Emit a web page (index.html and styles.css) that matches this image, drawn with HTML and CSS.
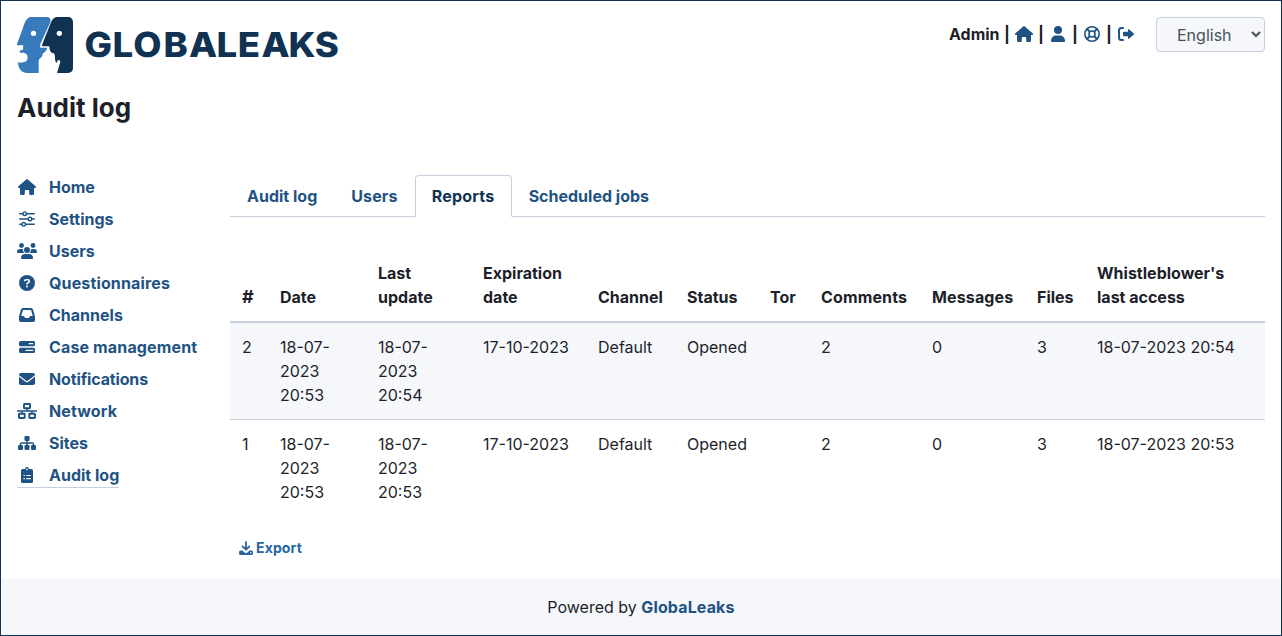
FILE: index.html
```html
<!DOCTYPE html>
<html lang="en">
<head>
<meta charset="utf-8">
<title>Audit log</title>
<link rel="stylesheet" href="styles.css">
</head>
<body>
<svg class="sprite" aria-hidden="true">
  <symbol id="home" viewBox="0 0 20 16"><path d="M9.200 .4Q10 -.3 10.800 .4L18.600 7.200Q19.200 7.900 18.900 8.500Q18.700 9 18 9H17V14.500Q17 16 15.500 16H13.500Q12.200 16 12.200 14.700V12Q12.200 11 11.200 11H8.800Q7.800 11 7.800 12V14.700Q7.800 16 6.500 16H4.500Q3 16 3 14.500V9H2Q1.300 9 1.100 8.500Q.8 7.900 1.400 7.200Z"/></symbol>
</svg>
<header class="header">
  <svg class="logo" viewBox="0 0 322 56" role="img" aria-label="GlobaLeaks">
    <g transform="scale(.33333) translate(-51 -51)">
      <path fill="#377bbc" d="M91 51H143Q154 54 151 67L122 130Q119 139 121 143H141Q142 152 134 156Q132 161 128 158Q129 171 121 174Q116 177 116 184V219H80Q59 217 55 196L54 186Q60 190 70 187Q83 185 83 172Q83 161 71 158H60Q57 154 62 151L69 149L70 136H52Q50 133 53 127L74 69Q79 55 91 51Z"/>
      <path fill="#103253" d="M168 51H206Q219 53 219 67V203Q219 218 204 219H171L181 186Q181 180 176 180Q172 180 169 190Q166 185 165 178Q166 162 160 159Q155 161 151 154Q148 150 148 139H127Q125 137 128 130L151 72Q156 56 168 51Z"/>
      <circle cx="100.500" cy="100" r="8" fill="#fff"/><circle cx="178" cy="100" r="8" fill="#fff"/>
    </g>
    <text class="wordmark" transform="scale(1.06 1)" y="40" x="63.800 90.100 109.700 138.200 162.300 188.200 208.300 230.700 256.100 281">GLOBALEAKS</text>
  </svg>
  <div class="tools">
    <span class="name">Admin</span>
    <span class="bar">|</span><svg class="icon"><use href="#home" width="20" height="16"/></svg>
    <span class="bar">|</span><svg class="icon" viewBox="0 0 20 16"><circle cx="10" cy="4" r="4"/><path d="M3 15C3 11.500 5.500 9.500 8.500 9.500H11.500C14.500 9.500 17 11.500 17 15Q17 16 16 16H4Q3 16 3 15Z"/></svg>
    <span class="bar">|</span><svg class="icon line" viewBox="0 0 20 16"><circle cx="10" cy="8" r="7.200"/><circle cx="10" cy="8" r="3"/><path d="M5 3L8 6M15 3L12 6M5 13L8 10M15 13L12 10" stroke-width="1.800"/></svg>
    <span class="bar">|</span><svg class="icon" viewBox="0 0 20 16"><path class="stroke" stroke-width="2" stroke-linecap="round" d="M7 2H5.500Q3 2 3 4.500V11.500Q3 14 5.500 14H7"/><path d="M8 5.800Q7 5.800 7 6.800V9.200Q7 10.200 8 10.200H12V12Q12 13.500 13.200 12.600L17.600 8.700Q18.200 8 17.600 7.300L13.200 3.400Q12 2.500 12 4V5.800Z"/></svg>
  </div>
  <select class="language" aria-label="Language"><option>English</option></select>
</header>
<h1 class="title">Audit log</h1>
<div class="layout">
  <nav class="sidebar">
    <a><svg class="icon"><use href="#home" width="20" height="16"/></svg>Home</a>
    <a><svg class="icon" viewBox="0 0 20 16"><path class="stroke" stroke-width="1.600" stroke-linecap="round" d="M2.800 2.700H5.500M10 2.700H17.200M2.800 8H11M15 8H17.200M2.800 13.300H4.500M9 13.300H17.200"/><g class="stroke" stroke-width="1.400"><circle cx="7.700" cy="2.700" r="1.800"/><circle cx="13" cy="8" r="1.800"/><circle cx="6.700" cy="13.300" r="1.800"/></g></svg>Settings</a>
    <a><svg class="icon" viewBox="0 0 20 16"><circle cx="4.500" cy="2.500" r="2.400"/><circle cx="16" cy="2.500" r="2.400"/><circle cx="10" cy="7" r="3"/><path d="M0 9.300Q0 6 3.300 6H4.700Q5.600 6 6.200 6.400Q5.800 8.500 7.300 10H.7Q0 10 0 9.300ZM20 9.300Q20 6 16.700 6H15.300Q14.400 6 13.800 6.400Q14.200 8.500 12.700 10H19.300Q20 10 20 9.300ZM4 15.200Q4 11 8.200 11H11.800Q16 11 16 15.200Q16 16 15.200 16H4.800Q4 16 4 15.200Z"/></svg>Users</a>
    <a class="wide"><svg class="icon" viewBox="0 0 20 16"><circle cx="10" cy="8" r="8"/><path class="cut" stroke-width="1.500" stroke-linecap="round" stroke-linejoin="round" d="M7.700 5.800Q7.700 4.700 9 4.700H10.800Q12.400 4.700 12.400 6.200Q12.400 7.200 11.400 7.700L10 8.500V9"/><circle cx="10" cy="11.500" r="1" fill="#fff"/></svg>Questionnaires</a>
    <a><svg class="icon" viewBox="0 0 20 16"><path fill-rule="evenodd" d="M6 1H14Q15.600 1 16 2.600L18 9.500V13Q18 15 16 15H4Q2 15 2 13V9.500L4 2.600Q4.400 1 6 1ZM6 3L4.200 9H6.500Q7 9 7.300 9.600L8 11H12L12.700 9.600Q13 9 13.500 9H15.800L14 3Z"/></svg>Channels</a>
    <a class="wide"><svg class="icon" viewBox="0 0 20 16"><rect x="2" y="2" width="16" height="5.300" rx="1.500"/><rect x="2" y="8.700" width="16" height="5.300" rx="1.500"/><path class="cut" stroke-width="1.300" stroke-linecap="round" d="M12.200 4.650H15.800M9 11.350H15.800"/></svg>Case management</a>
    <a class="narrow"><svg class="icon" viewBox="0 0 20 16"><rect x="2" y="2" width="16" height="12" rx="1.800"/><path class="cut" stroke-width="1.100" d="M1.500 4.500L8.800 10.200Q10 11.100 11.200 10.200L18.500 4.500"/></svg>Notifications</a>
    <a class="wide"><svg class="icon" viewBox="0 0 20 16"><path class="stroke" stroke-width="1.500" d="M0 8H20M10 6V8M5 8V10.500M15 8V10.500"/><g class="stroke" stroke-width="1.900"><rect x="7" y="1" width="6" height="4.200" rx=".5"/><rect x="2" y="10.800" width="5.700" height="4.200" rx=".5"/><rect x="12.300" y="10.800" width="5.700" height="4.200" rx=".5"/></g></svg>Network</a>
    <a><svg class="icon" viewBox="0 0 20 16"><rect x="7.500" y="1" width="5" height="5" rx="1.200"/><rect x="1" y="10" width="5" height="5" rx="1.200"/><rect x="7.500" y="10" width="5" height="5" rx="1.200"/><rect x="14" y="10" width="5" height="5" rx="1.200"/><path class="stroke" stroke-width="1.400" d="M10 5V11M3.500 11V9Q3.500 8 4.500 8H15.500Q16.500 8 16.500 9V11"/></svg>Sites</a>
    <a class="current"><svg class="icon" viewBox="0 0 20 16"><rect x="4" y="2" width="12" height="14" rx="1.600"/><path d="M7 4V2H8Q8.300 0 10 0T12 2H13V4Z"/><circle cx="10" cy="2.400" r=".8" fill="#fff"/><path class="cut" stroke-width="1.200" d="M6.500 8.500H7.900M9.200 8.500H13.800M6.500 11.700H7.900M9.200 11.700H13.800"/></svg>Audit log</a>
  </nav>
  <main class="content">
    <div class="tabs"><a>Audit log</a><a class="wide">Users</a><a class="active">Reports</a><a>Scheduled jobs</a></div>
    <table class="reports">
      <colgroup><col class="c-id"><col class="c-date"><col class="c-update"><col class="c-expiry"><col class="c-channel"><col class="c-status"><col class="c-tor"><col class="c-comments"><col class="c-messages"><col class="c-files"><col></colgroup>
      <thead><tr><th class="hash">#</th><th>Date</th><th>Last<br>update</th><th>Expiration<br>date</th><th>Channel</th><th>Status</th><th>Tor</th><th class="wide">Comments</th><th class="wide">Messages</th><th>Files</th><th>Whistleblower's<br>last access</th></tr></thead>
      <tbody>
        <tr><td>2</td><td>18-07-<br>2023<br>20:53</td><td>18-07-<br>2023<br>20:54</td><td>17-10-2023</td><td>Default</td><td>Opened</td><td></td><td>2</td><td>0</td><td>3</td><td>18-07-2023 20:54</td></tr>
        <tr><td>1</td><td>18-07-<br>2023<br>20:53</td><td>18-07-<br>2023<br>20:53</td><td>17-10-2023</td><td>Default</td><td>Opened</td><td></td><td>2</td><td>0</td><td>3</td><td>18-07-2023 20:53</td></tr>
      </tbody>
    </table>
    <a class="export"><svg viewBox="0 0 14 14"><path class="stroke" stroke-width="1.800" stroke-linecap="round" stroke-linejoin="round" d="M7 1V8.500M3.700 5.500L7 8.700L10.300 5.500"/><path d="M1.500 9.500H3.500L5.500 11.400Q7 12.400 8.500 11.400L10.500 9.500H12.500Q14 9.500 14 11V12.500Q14 14 12.500 14H1.500Q0 14 0 12.500V11Q0 9.500 1.500 9.500Z"/><circle cx="11.800" cy="11.700" r=".7" fill="#fff"/></svg>Export</a>
  </main>
</div>
<footer class="footer">Powered by&nbsp;<a class="wide">GlobaLeaks</a></footer>
</body>
</html>
```
FILE: styles.css
```css
* { box-sizing: border-box; }
body {
  margin: 0;
  height: 636px;
  border: 1px solid #103253;
  display: flex;
  flex-direction: column;
  overflow: hidden;
  background: #fff;
  color: #1d1f2a;
  font: 16px/24px Inter, "Liberation Sans", sans-serif;
}
a { color: #1f5383; font-weight: 700; }
.wide { letter-spacing: .14px; }
.narrow { letter-spacing: -.14px; }
.sprite { display: none; }
.icon { width: 20px; height: 16px; flex: none; fill: #1f5383; }
.stroke { fill: none; stroke: #1f5383; }
.line { fill: none; stroke: #1f5383; stroke-width: 1.6; }
.cut { fill: none; stroke: #fff; }
.header { display: flex; align-items: flex-start; padding: 16px 16px 0; height: 88px; }
.logo { width: 322px; height: 56px; flex: none; }
.wordmark { font-family: Inter, sans-serif; font-size: 34.5px; font-weight: 800; fill: #103253; text-rendering: geometricPrecision; }
.tools { display: flex; align-items: center; height: 34px; margin-left: auto; font-weight: 700; }
.name { width: 51px; }
.bar { width: 14px; text-align: center; }
.language {
  width: 109px;
  height: 35px;
  margin-left: 20px;
  padding: 0 0 0 16px;
  border: 1px solid #c6d0df;
  border-radius: 4px;
  background: #f5f7fb;
  color: #495057;
  font: 16px/24px Inter, sans-serif;
}
.title { margin: 0; height: 86px; font-size: 26px; line-height: 38px; font-weight: 700; }
.title, .layout { padding: 0 16px; }
.layout { display: flex; flex: 1; }
.sidebar { width: 213px; display: flex; flex-direction: column; align-items: flex-start; gap: 7px; }
.sidebar a { display: flex; align-items: center; gap: 12px; height: 25px; border-bottom: 1px solid transparent; }
.sidebar .current { border-color: #c6d0df; }
.content { flex: 1; }
.tabs { display: flex; height: 42px; border-bottom: 1px solid #c6d0df; }
.tabs a { height: 42px; padding: 8px 16px; border: 1px solid transparent; border-radius: 4px 4px 0 0; }
.tabs .active { width: 97px; letter-spacing: .22px; color: #103253; background: #fff; border-color: #c6d0df #c6d0df #fff; }
.reports { width: 100%; margin-top: 32px; table-layout: fixed; border-collapse: separate; border-spacing: 0; text-align: left; }
.reports th { padding: 12px; vertical-align: bottom; white-space: nowrap; border-bottom: 2px solid #c6d0df; }
.reports td { padding: 12px; vertical-align: top; white-space: nowrap; }
.reports tbody tr:first-child td { background: #f5f7fb; border-bottom: 1px solid #c6d0df; }
.reports .hash { font-size: 18px; }
.c-id { width: 38px; }
.c-date { width: 98px; }
.c-update { width: 105px; }
.c-expiry { width: 115px; }
.c-channel { width: 89px; }
.c-status { width: 83px; }
.c-tor { width: 51px; }
.c-comments { width: 111px; }
.c-messages { width: 105px; }
.c-files { width: 60px; }
.export { display: inline-flex; align-items: center; gap: 3px; margin: 20px 0 0 9px; font-size: 14px; letter-spacing: .14px; color: #2866a2; }
.export svg { width: 14px; height: 14px; fill: #2866a2; }
.export .stroke { stroke: #2866a2; fill: none; }
.footer { display: flex; justify-content: center; align-items: center; height: 56px; background: #f5f7fb; }
```
